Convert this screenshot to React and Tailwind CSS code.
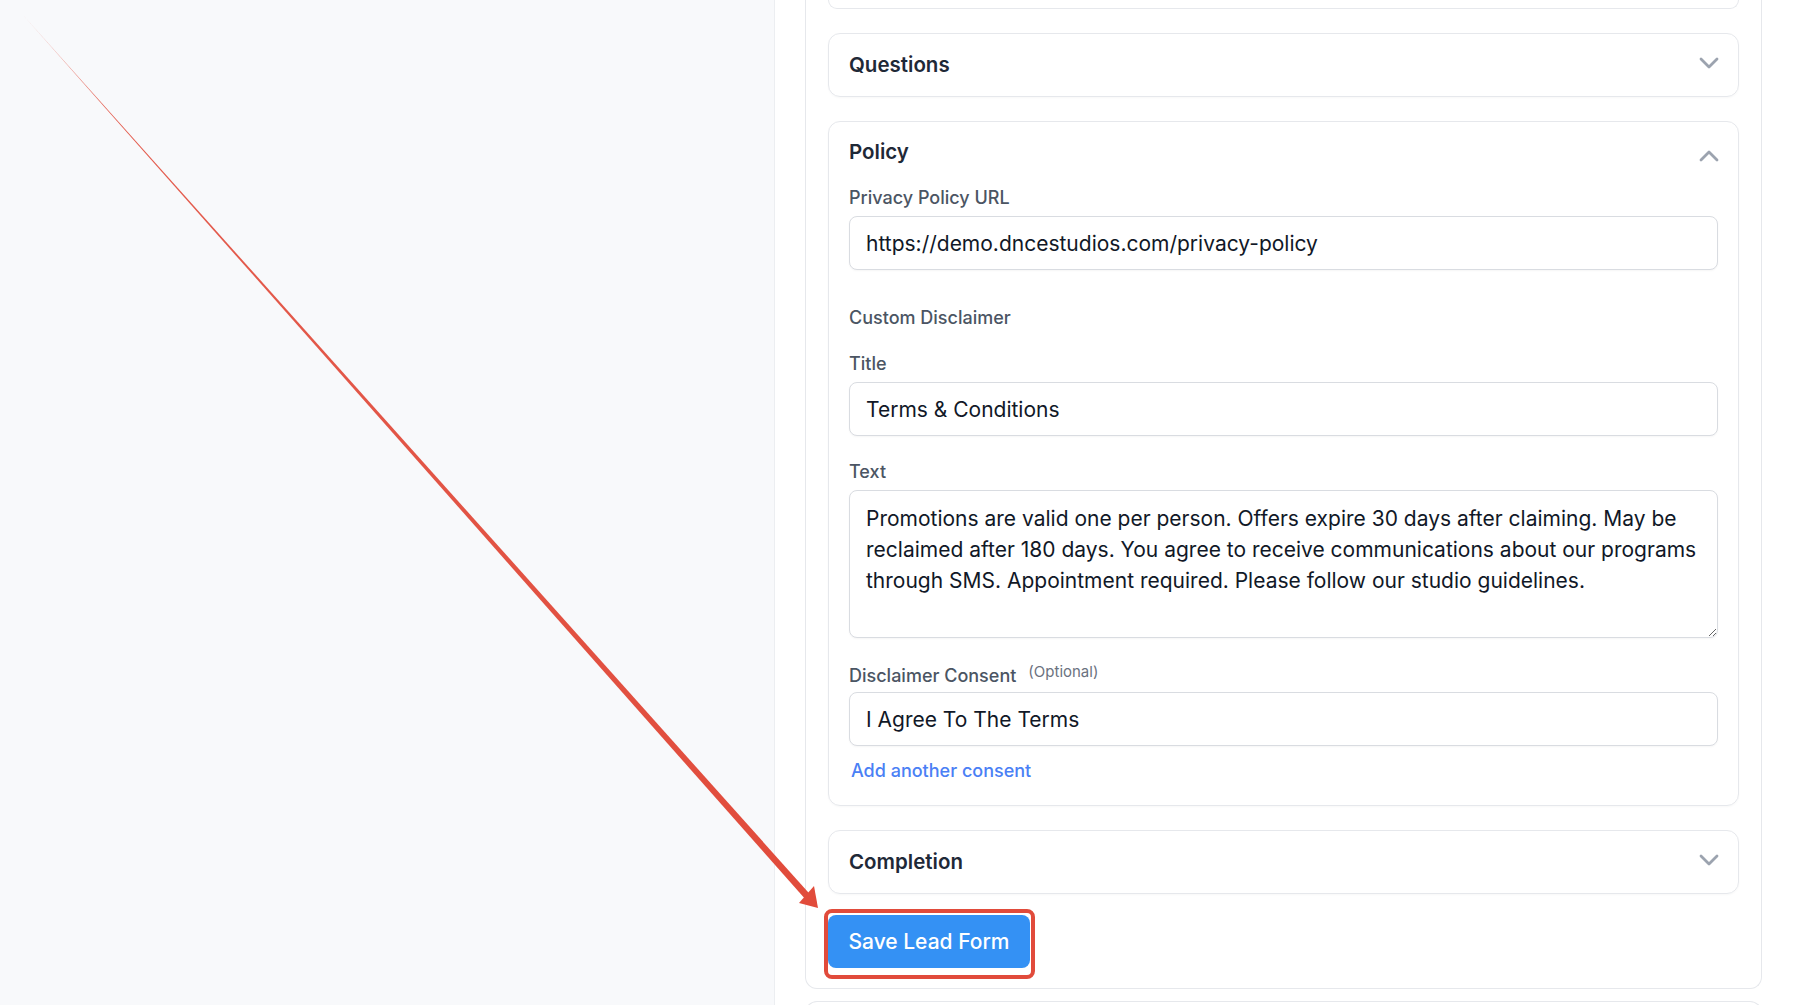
import React from 'react';

const Chevron = ({ up = false }) => (
  <svg width="22" height="14" viewBox="0 0 22 14" fill="none" stroke="#9ca3af" strokeWidth="2.8" strokeLinecap="round" strokeLinejoin="round" className={up ? 'mt-2 -mr-[2px]' : '-mt-1 -mr-[2px]'}>
    {up ? <polyline points="3,11 11,3 19,11" /> : <polyline points="3,3 11,11 19,3" />}
  </svg>
);

const Label = ({ children, className = '' }) => (
  <div className={`pt-[2px] text-[18px] leading-6 font-medium text-[#4b5563] ${className}`}>{children}</div>
);

const Field = ({ value }) => (
  <input
    readOnly
    value={value}
    className="block w-full h-[54px] px-4 rounded-lg border border-[#d9dce1] bg-white text-[21px] text-[#111827] shadow-[0_1px_2px_rgba(0,0,0,0.04)] outline-none"
  />
);

const CardHeader = ({ title, open, className = 'py-[19px]' }) => (
  <div className={`flex items-center justify-between px-5 ${className}`}>
    <h3 className="text-[20.5px] leading-6 font-semibold text-[#1f2937]">{title}</h3>
    <Chevron up={open} />
  </div>
);

export default function App() {
  return (
    <div className="relative flex h-screen w-full overflow-hidden bg-white" style={{ fontFamily: 'Inter, "Noto Sans", sans-serif' }}>
      {/* preview side */}
      <div className="w-[774px] shrink-0 bg-[#f8f9fb]" />

      {/* editor side */}
      <div className="flex-1 border-l border-[#eceef1] pl-[30px] pr-[36px]">
        <div className="rounded-b-xl border-x border-b border-[#e6e8ec] px-[22px] pb-5">
          <div className="flex flex-col gap-6">
            <div className="h-[9px] rounded-b-xl border-x border-b border-[#e6e8ec]" />

            <div className="rounded-xl border border-[#e6e8ec] shadow-[0_1px_2px_rgba(0,0,0,0.03)]">
              <CardHeader title="Questions" />
            </div>

            <div className="rounded-xl border border-[#e6e8ec] shadow-[0_1px_2px_rgba(0,0,0,0.03)]">
              <CardHeader title="Policy" open className="pt-[18px] pb-[20px]" />
              <div className="px-5 pb-[22px]">
                <Label className="mb-[6px]">Privacy Policy URL</Label>
                <Field value="https://demo.dncestudios.com/privacy-policy" />

                <Label className="mt-[34px]">Custom Disclaimer</Label>

                <Label className="mt-[20px] mb-[6px]">Title</Label>
                <Field value="Terms & Conditions" />

                <Label className="mt-[22px] mb-[6px]">Text</Label>
                <textarea
                  readOnly
                  defaultValue="Promotions are valid one per person. Offers expire 30 days after claiming. May be reclaimed after 180 days. You agree to receive communications about our programs through SMS. Appointment required. Please follow our studio guidelines."
                  className="block w-full h-[148px] px-4 py-3 rounded-lg border border-[#d9dce1] bg-white text-[21px] leading-[31px] text-[#111827] shadow-[0_1px_2px_rgba(0,0,0,0.04)] outline-none resize-y"
                />

                <div className="mt-6 mb-[4px] flex items-start gap-3">
                  <Label>Disclaimer Consent</Label>
                  <span className="pt-[2px] text-[15px] leading-4 text-[#6b7280]">(Optional)</span>
                </div>
                <Field value="I Agree To The Terms" />

                <a href="#" className="mt-3 ml-[2px] block pt-[1px] text-[18px] leading-6 font-medium text-[#4a80f5]">Add another consent</a>
              </div>
            </div>

            <div className="rounded-xl border border-[#e6e8ec] shadow-[0_1px_2px_rgba(0,0,0,0.03)]">
              <CardHeader title="Completion" />
            </div>
          </div>

          <div className="mt-[21px]">
            <div className="relative inline-block">
              <button className="h-[53px] w-[202px] rounded-lg bg-[#3491f4] text-[21px] font-medium text-white">
                Save Lead Form
              </button>
              <div className="pointer-events-none absolute -left-1 -top-[6px] -right-[5px] -bottom-[11px] rounded-lg border-4 border-[#e14b3b]" />
            </div>
          </div>
        </div>

        <div className="mt-3 h-10 rounded-t-xl border-x border-t border-[#e6e8ec]" />
      </div>

      {/* annotation arrow */}
      <svg className="pointer-events-none absolute left-0 top-0" width="1798" height="1005" viewBox="0 0 1798 1005">
        <defs>
          <linearGradient id="fade" x1="23" y1="15" x2="817" y2="907" gradientUnits="userSpaceOnUse">
            <stop offset="0" stopColor="#e14b3b" stopOpacity="0.35" />
            <stop offset="0.1" stopColor="#e14b3b" stopOpacity="0.9" />
            <stop offset="1" stopColor="#e14b3b" stopOpacity="1" />
          </linearGradient>
        </defs>
        <polygon points="23,15 804.5,898.3 809.5,893.7" fill="url(#fade)" />
        <polygon points="818,908 799,903 814,886" fill="#e14b3b" />
      </svg>
    </div>
  );
}
